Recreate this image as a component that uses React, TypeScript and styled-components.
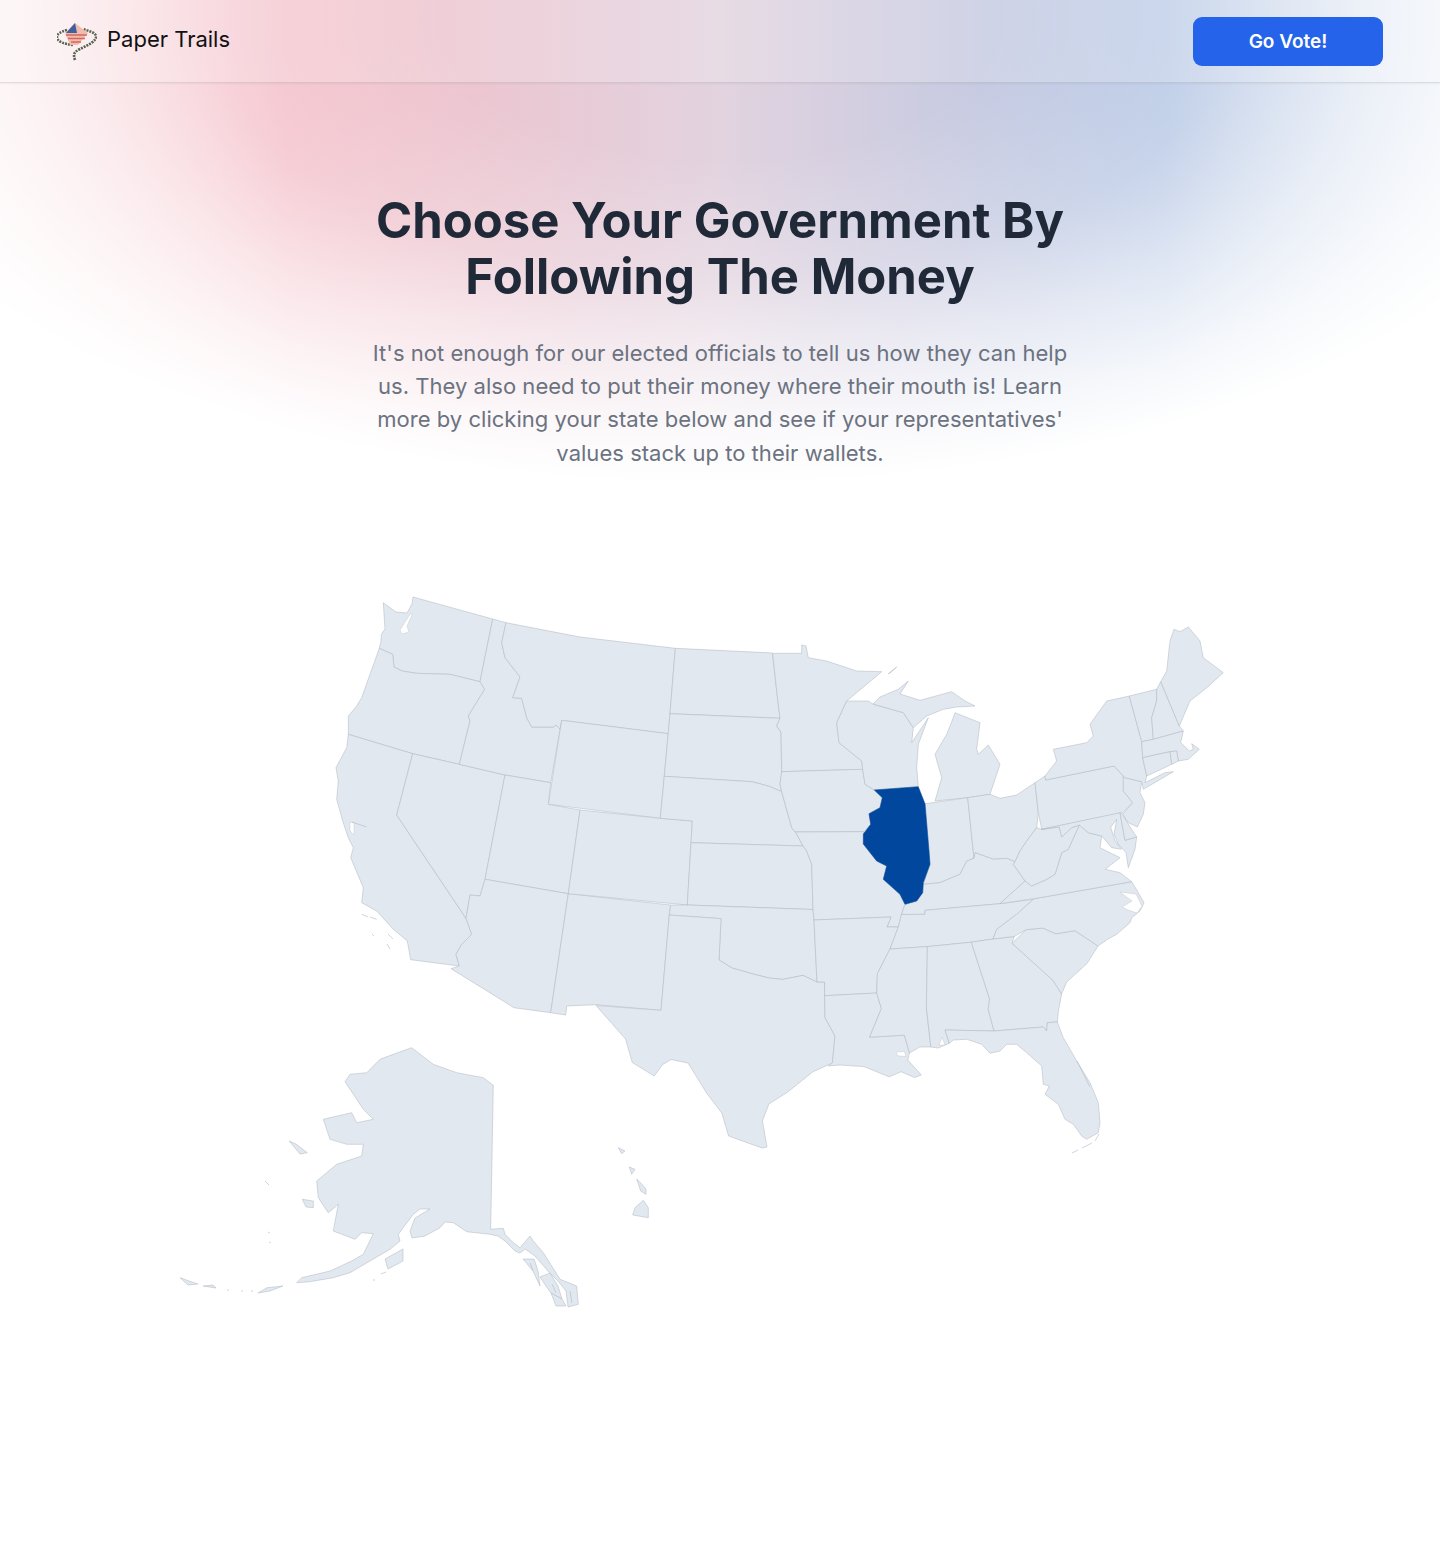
import styled, { createGlobalStyle } from 'styled-components';

const GlobalStyle = createGlobalStyle`
  html, body {
    margin: 0;
    padding: 0;
    background: #fff;
    font-family: Inter, "Liberation Sans", sans-serif;
  }
`;

const Page = styled.div`
  position: relative;
  min-height: 1543px;
  overflow: hidden;
  background: #fff;
`;

const Glow = styled.div`
  position: absolute;
  top: 0;
  left: 0;
  width: 100%;
  height: 520px;
  background: linear-gradient(90deg, #f9dde1 0%, #f3bcc6 20%, #e2d3df 50%, #b2c4e3 81%, #d8e1f0 100%);
  mask-image: radial-gradient(
    ellipse 920px 465px at 720px 20px,
    #000 0%,
    #000 30%,
    rgba(0, 0, 0, 0.75) 55%,
    rgba(0, 0, 0, 0.4) 72%,
    rgba(0, 0, 0, 0.14) 88%,
    transparent 100%
  );
`;

const Header = styled.header`
  position: relative;
  display: flex;
  align-items: center;
  justify-content: space-between;
  height: 82px;
  padding: 0 57px;
  background: rgba(255, 255, 255, 0.18);
  border-bottom: 1px solid rgba(120, 120, 130, 0.2);
  box-shadow: 0 1px 2px rgba(0, 0, 0, 0.05);
`;

const Brand = styled.div`
  display: flex;
  align-items: center;
  gap: 10px;
  margin-top: -4px;
`;

const LogoMark = styled.svg`
  display: block;
  width: 40px;
  height: 40px;
  margin-top: 6px;
`;

const BrandName = styled.span`
  font-size: 22px;
  color: #111;
`;

const VoteButton = styled.button`
  width: 190px;
  height: 49px;
  margin-top: 1px;
  border: none;
  border-radius: 9px;
  background: #2563eb;
  color: #fff;
  font-family: inherit;
  font-size: 19px;
  font-weight: 600;
`;

const Hero = styled.section`
  position: relative;
  display: flex;
  flex-direction: column;
  align-items: center;
  padding-top: 110px;
`;

const Title = styled.h1`
  margin: 0;
  width: 760px;
  font-size: 49px;
  line-height: 56px;
  font-weight: 700;
  color: #1f2937;
  text-align: center;
`;

const Lead = styled.p`
  margin: 31.7px 0 0;
  width: 720px;
  font-size: 22px;
  letter-spacing: 0.03px;
  line-height: 33.3px;
  color: #6b7280;
  text-align: center;
`;

const MapSection = styled.section`
  position: relative;
  display: flex;
  justify-content: center;
  margin-top: 121.3px;
`;

const MapSvg = styled.svg`
  display: block;
  width: 1070px;
  height: 730px;
  margin-left: -30px;
`;

const StateShape = styled.polygon<{ $active?: boolean }>`
  fill: ${(props) => (props.$active ? '#00479d' : '#e2e8f0')};
  stroke: ${(props) => (props.$active ? '#00479d' : '#afb4bf')};
  stroke-width: 0.5;
  stroke-linejoin: round;
`;

const Water = styled.polygon`
  fill: #fff;
  stroke: #bcc1cb;
  stroke-width: 0.4;
`;

const Trace = styled.polyline`
  fill: none;
  stroke: #b4b9c4;
  stroke-width: 0.6;
`;

const states: { id: string; points: string }[] = [
  { id: 'WA', points: '413,596 492.7,618 480,680.7 450,673.3 416.7,672.3 402,670 394,666 392.7,653.3 379.3,647.3 381,640 381.3,633.3 385,628 383.3,601.7 396,611 407,612 412,603' },
  { id: 'OR', points: '379.3,647.3 392.7,653.3 394,666 402,670 416.7,672.3 450,673.3 480,680.7 484.7,688.3 468.3,715 470,720 459.3,763.3 412.7,752.7 348.3,733.3 348.3,715 356,706 361.7,696.7' },
  { id: 'CA', points: '348.3,733.3 412.7,752.7 396.7,814 466,917.3 471.7,933.3 461.7,943.3 456,953.3 459.3,965 410.7,958.7 407.3,940 393.3,928.3 376.7,910 361.7,901.7 363.3,886.7 350.7,856.7 353.3,846.7 348.3,836.7 342.7,820 336.7,798.3 338.3,780 336,766.7 346.7,746.7' },
  { id: 'NV', points: '412.7,752.7 459.3,763.3 505,774 485,878.3 480,895 470,894 466,917.3 396.7,814' },
  { id: 'ID', points: '492.7,618 506,621.7 501.7,641.7 505,656.7 520,676 512.7,696.7 521.7,697.3 526.7,716.7 531.7,726 553.3,726 556,724 560,728 561.7,719.3 550.7,781.7 505,774 459.3,763.3 470,720 468.3,715 484.7,688.3 480,680.7' },
  { id: 'MT', points: '506,621.7 580,636 675.3,647.3 668.3,732.7 561.7,719.3 560,728 556,724 553.3,726 531.7,726 526.7,716.7 521.7,697.3 512.7,696.7 520,676 505,656.7 501.7,641.7' },
  { id: 'WY', points: '561.7,719.3 668.3,732.7 660.3,817.3 548.3,803.3' },
  { id: 'UT', points: '505,774 550.7,781.7 548.3,803.3 580,809 568.3,892.7 485,878.3' },
  { id: 'AZ', points: '485,878.3 568.3,892.7 550.7,1011.7 514,1006.7 451,967.7 459.3,965 456,953.3 461.7,943.3 471.7,933.3 466,917.3 470,894 480,895' },
  { id: 'NM', points: '568.3,892.7 670.7,904 669.3,914 661,1009.3 595.7,1003.7 566.7,1005 565.7,1014 550.7,1011.7' },
  { id: 'CO', points: '580,809 660.3,817.3 692.3,820 687.3,904 568.3,892.7' },
  { id: 'ND', points: '675.3,647.3 772.3,652 776.7,690 780,717.3 670,712.7' },
  { id: 'SD', points: '670,712.7 780,717.3 776.7,725 781,731 781.7,770.7 780,783 781.7,790.7 768.3,785 751.7,780.7 664.3,775.3' },
  { id: 'NE', points: '664.3,775.3 751.7,780.7 768.3,785 781.7,790.7 791.7,826.7 796.7,833 803,845 691,841.7 692.3,820 660.3,817.3' },
  { id: 'KS', points: '691,841.7 803,845 806.7,850 811.7,863.3 813,908.5 687.3,904' },
  { id: 'OK', points: '670.7,904 687.3,904 813,908.5 814,919 817,981 803,974.4 782.7,978.4 769,977 755.6,973.7 732,967 719,959 721,917.6 669.3,914' },
  { id: 'TX', points: '669.3,914 721,917.6 719,959 732,967 755.6,973.7 769,977 782.7,978.4 803,974.4 817,981 824.6,981 824.6,994.7 825,1016.6 835,1035 832.4,1062 813,1070.7 787.8,1091 769,1102.8 762.4,1119.7 767,1146 762,1147 728.6,1135 721.8,1112 706.6,1092 688,1062 671,1058.5 662.7,1063.5 654.2,1075 632.3,1061.5 625.5,1038 596,1004.5 661,1009.3' },
  { id: 'MN', points: '772.7,652.3 801.7,652.3 801.7,644 806,645 808.3,656.7 826.7,660 856.7,670 881.7,670.7 846.7,700 836.7,721.7 839,741.7 861.7,760 862.7,768.3 781.7,770.7 781,731 776.7,725 780,717.3 776.7,690' },
  { id: 'IA', points: '781.7,770.7 862.7,768.3 865,783.3 874.3,789 882.3,796.7 880,806.7 869,812.7 870.7,823.3 864,830.7 795,831 791.7,826.7 781.7,790.7 780,783' },
  { id: 'MO', points: '795,831 864,830.7 863.3,843 876.7,860 886.7,865 883.3,878.3 900,893.3 905,903.3 901.5,913.5 898.3,926 887,926 891,916 814,919 813,908.5 811.7,863.3 806.7,850 803,845 796.7,833' },
  { id: 'AR', points: '814,919 891,916 887,926 898.3,926 890,948 877.4,972.7 876.7,992 824.6,994.7 824.6,981 817,981' },
  { id: 'LA', points: '824.6,994.7 876.7,992 881.4,1007.5 869.6,1036.2 904.4,1034.2 909.5,1052 907.8,1059 921.3,1074 914.5,1076.5 901,1070.7 889.2,1075.8 863.8,1065.6 840,1064 828.3,1065 832.4,1062 835,1035 825,1016.6' },
  { id: 'WI', points: '846.7,700 868.3,700 873.3,703.3 903.3,711.7 913.3,726.7 911.7,741.7 928.3,716.7 918.3,743.3 916.7,766.7 918.3,785.7 874.3,789 865,783.3 862.7,768.3 861.7,760 839,741.7 836.7,721.7' },
  { id: 'MIU', points: '873,703 880,696 898.3,688.3 908.3,680 900,693 920,699.3 951.7,690.7 965,700 975,705 956.7,706 943.3,708.3 926.7,715 913.3,726.7 903.3,711.7' },
  { id: 'MIL', points: '955,711.7 980,721.7 976.7,748.3 978.3,753.3 988.3,744 1000,763.3 990,793.3 967.7,796.7 935,800 941.7,776.7 935,753.3 946.7,733.3 953.3,716.7' },
  { id: 'IN', points: '925,802.7 967.7,796.7 974,857.3 966.7,860 960,873.3 951.7,876.7 940,881.7 923.3,883.3 930,863.3 929,850' },
  { id: 'OH', points: '967.7,796.7 990,793.3 1000,797.3 1016.7,794 1035,781.7 1038.3,811.7 1036.7,826.7 1026.7,840 1020,850 1015,860.7 1006.7,857.3 993.3,858.3 975,851.7 974,857.3' },
  { id: 'KY', points: '975,851.7 993.3,858.3 1006.7,857.3 1015,860.7 1013.3,863.3 1025,880 1000,902.7 925,909.3 925,913.3 901.5,913.5 905,903.3 916.7,900 922.7,891.7 923.3,883.3 940,881.7 951.7,876.7 960,873.3 966.7,860 974,857.3' },
  { id: 'TN', points: '901.5,913.5 925,913.3 925,909.3 1000,902.7 1033.3,898.3 1016.7,913.3 996.7,928.3 993,938 971.3,941.2 927.4,945.6 890,948 898.3,926' },
  { id: 'MS', points: '890,948 927.4,945.6 926.4,1006.5 930.8,1046 919.6,1046 909.5,1052 904.4,1034.2 869.6,1036.2 881.4,1007.5 876.7,992 877.4,972.7' },
  { id: 'AL', points: '927.4,945.6 971.3,941.2 989.6,998 988.2,1008.2 994,1030 945,1029 949.3,1042.3 938.2,1047 930.8,1046 926.4,1006.5' },
  { id: 'GA', points: '971.3,941.2 993,938 1014.3,935.5 1012,942.3 1053,979.4 1061.6,993 1058.2,1011.6 1057.3,1021 1047.3,1021.7 1046.7,1030 1043.3,1026 994,1030 988.2,1008.2 989.6,998' },
  { id: 'SC', points: '1012,942.3 1026,928.7 1043,927 1055.9,932.8 1075,929.7 1098,945 1087,962.5 1066.7,981 1061.6,993 1053,979.4' },
  { id: 'NC', points: '1040,896.7 1131.7,880.7 1138.3,891.7 1144,901.7 1140,910 1131.7,916.7 1130,921.7 1116.7,933.3 1108,938 1098,945 1075,929.7 1055.9,932.8 1043,927 1026,928.7 1014.3,935.5 993,938 996.7,928.3 1016.7,913.3 1033.3,898.3' },
  { id: 'FL', points: '945,1029 994,1030 1043.3,1026 1046.7,1030 1047.3,1021.7 1057.3,1021 1063.3,1036.7 1076.7,1060 1090,1081.7 1098.3,1101.7 1100,1121.7 1098.3,1131.7 1086.7,1138.3 1081.7,1135 1073.3,1123.3 1065,1118.3 1058.3,1103.3 1045,1093.3 1049.3,1085 1043.3,1083.3 1041.7,1065 1026.7,1051.7 1016.7,1043.3 1006.7,1043.3 1000,1050 990,1052.3 981.7,1043.3 966.7,1038.3 953.3,1039 949.3,1042.3' },
  { id: 'VA', points: '1025,880 1031.7,885 1046.7,878.3 1055,873.3 1061.7,851.7 1068.3,848.3 1079.3,824 1088.3,831.7 1101.7,835 1100,846.7 1120,856.7 1105,868.3 1120,871.7 1131.7,880.7 1040,896.7 1000,902.7' },
  { id: 'WV', points: '1015,860.7 1020,850 1026.7,840 1036.7,826.7 1041.7,828.3 1059.3,826 1061.7,836 1071.7,826.7 1079.3,824 1068.3,848.3 1061.7,851.7 1055,873.3 1046.7,878.3 1031.7,885 1025,880 1013.3,863.3' },
  { id: 'PA', points: '1035,781.7 1045,775 1045.7,779 1114,765 1123.3,775 1123.3,790 1132.7,801.7 1122.7,811.7 1041.7,828.3 1038.3,811.7' },
  { id: 'MD', points: '1041.7,828.3 1120,811.7 1125,839.3 1136.7,836 1135,848.3 1128.3,866.7 1126,851.7 1123.3,848.3 1118.3,843.3 1114,833.3 1116.7,818.3 1110.7,826 1115,840 1121.7,848.3 1111.7,846.7 1101.7,835 1088.3,831.7 1079.3,824 1071.7,826.7 1061.7,836 1059.3,826' },
  { id: 'DE', points: '1120,811.7 1122.7,813.3 1127.3,821.7 1136.7,836 1125,839.3' },
  { id: 'NJ', points: '1125,776.7 1141.7,780.7 1140,791.7 1145,801.7 1143.3,813.3 1137.3,826 1128.3,821.7 1122.7,813.3 1132.7,801.7 1123.3,790 1123.3,775' },
  { id: 'NY', points: '1045,775 1056.7,760 1053.3,748.3 1086.7,741.7 1093.3,735 1090,723.3 1106.7,700 1129.3,695 1141.7,740.7 1142.7,756.7 1146.7,775 1145,781.7 1165,771.7 1173.3,770.7 1143.3,788.3 1141.7,780.7 1125,776.7 1114,765 1045.7,779' },
  { id: 'VT', points: '1129.3,695 1156.7,688.3 1156.7,700 1151.7,716.7 1153.3,738.3 1141.7,740.7' },
  { id: 'NH', points: '1156.7,688.3 1160.7,680.7 1179.3,725 1183.3,730 1153.3,738.3 1151.7,716.7 1156.7,700' },
  { id: 'ME', points: '1160.7,680.7 1166.7,670 1170,640 1174,628.3 1180,630.7 1188.3,626 1200,640 1203.3,656.7 1223.3,671.7 1206.7,686.7 1190,700 1179.3,725' },
  { id: 'MA', points: '1141.7,740.7 1153.3,738.3 1183.3,730 1180.7,741.7 1189.3,750 1193.3,748.3 1191.7,742.7 1199.3,748.3 1188.3,758.3 1178.3,760 1176.7,750 1170,750.7 1142.7,756.7' },
  { id: 'CT', points: '1142.7,756.7 1170,750.7 1171.7,763.3 1146.7,775' },
  { id: 'RI', points: '1170,750.7 1176.7,750 1178.3,760 1171.7,763.3' },
  { id: 'AK', points: '411.7,1046.7 433.3,1063.3 456.7,1071.7 483.3,1076.7 493.3,1084.3 490.7,1228.3 503.3,1227.3 505,1233.3 513.3,1241.7 520,1246.7 530,1235 533.3,1240 543.3,1251.7 560,1278.3 576.7,1285 578.3,1303.3 568,1306 566,1290 558,1280 548,1270 535,1255 525,1248 520,1252 515,1250 505,1240 498,1235 490,1233.3 466.7,1230.7 453.3,1221.7 445,1221 440,1226.7 425,1235 412,1237 410,1230 415,1217 430,1208 420,1208 413.3,1213.3 398.3,1233.3 400,1240 390,1248.3 370,1260 350,1271.7 333.3,1276.7 310,1280.7 296.7,1281.7 301.7,1276.7 330,1270 351.7,1260 363.3,1253.3 373.3,1232.7 361.7,1231.7 355,1238.3 333.3,1230 338.3,1203.3 328.3,1211.7 318.3,1196.7 316.7,1180 336.7,1163.3 361.7,1155 363.3,1143.3 346.7,1143.3 330,1138.3 323.3,1118.3 351.7,1111.7 356.7,1121.7 373.3,1118.3 363.3,1108.3 345,1080.7 350,1073.3 366.7,1071.7 380,1058.3 393.3,1053.3' },
  { id: 'AK1', points: '289.3,1140 296,1143 307.3,1151.7 300,1153 295,1147' },
  { id: 'AK2', points: '302.3,1198.3 313.3,1200 313.3,1206.7 306,1206' },
  { id: 'AK3', points: '385,1258 403,1248 403,1260 388,1268' },
  { id: 'AK4', points: '180,1276.7 192,1281 198,1283 188,1284' },
  { id: 'AK5', points: '203,1285 213,1284 216,1287' },
  { id: 'AK6', points: '258,1292 267,1286.7 283,1285 270,1290' },
  { id: 'AK7', points: '523,1258 534,1258 538,1270 540,1285 533,1270' },
  { id: 'AK8', points: '540,1276 550,1272 558,1285 562,1298 551,1292 546,1285' },
  { id: 'AK9', points: '551,1292 562,1298 566,1305 556,1305' },
  { id: 'HI1', points: '618.3,1146.7 625,1150 621.7,1152.7' },
  { id: 'HI2', points: '629.3,1166 635,1168.3 631.7,1173.3' },
  { id: 'HI3', points: '636.7,1178 641.7,1183 646,1188 646,1193.3 640.7,1190' },
  { id: 'HI4', points: '643.3,1199.3 648.3,1206.7 648.3,1216.7 632.7,1214 635,1206.7' },
  { id: 'IR', points: '888.3,672.7 896.7,666 890,672' },
  { id: 'IL', points: '874.3,789 918.3,785.7 925,802.7 929,850 930,863.3 923.3,881.7 922.7,891.7 916.7,900 905,903.3 900,893.3 883.3,878.3 886.7,865 876.7,860 863.3,843 863.3,833 870.7,823.3 869,812.7 880,806.7 882.3,796.7' },
];

const inlets = [
  '350,821 354,822 354,834 350,830',
  '411,612 412,614 407,625 409,631 402,633 400,629 405,621',
  '1120,891 1136,893 1142,905 1137,912 1128,909 1122,906 1132,900',
  '896,1051 904.4,1050.4 906,1055.5 897.6,1054.8',
  '939,1044 942,1036 945,1044',
];

const traces = [
  '352,821 366.7,826',
  '361.7,913.3 368,916',
  '370,916 376.7,918.3',
  '372,933 374,935',
  '388,933 393,938',
  '387,943 390,948',
  '1072,1152 1078,1149',
  '1082,1147 1092,1142',
  '1095,1140 1099,1133',
  '1077,1060 1090,1086',
  '265,1180 269,1184',
  '268,1231 270,1232',
  '269,1241 271,1242',
  '227,1289 229,1289',
  '241,1290 243,1290',
  '251,1290 253,1290',
  '373,1279 375,1279',
  '381,1273 386,1271',
  '533,1270 530,1262',
  '552,1283 556,1292',
  '570,1290 572,1302',
];

const Logo = () => (
  <LogoMark viewBox="57 22 40 40" aria-hidden="true">
    <path
      d="M75 60 C73 54 74 52 80 49 C88 45 97 41 96 36 C95 32 88 31 83 29 M67 30 C60 32 57 34 57 37 C57 42 65 44 73 45"
      fill="none"
      stroke="#56644f"
      strokeWidth="2.6"
      strokeDasharray="2 1"
    />
    <polygon points="75,23 88,33 78,45 70,45 65,33" fill="#efbcae" />
    <polygon points="75,23 77,33 66,33" fill="#3f5f9f" />
    <path d="M66 35 H87 M68 38.5 H85 M71 42 H81" stroke="#d4685e" strokeWidth="1.3" />
  </LogoMark>
);

export default function App() {
  return (
    <Page>
      <GlobalStyle />
      <Glow />
      <Header>
        <Brand>
          <Logo />
          <BrandName>Paper Trails</BrandName>
        </Brand>
        <VoteButton>Go Vote!</VoteButton>
      </Header>
      <Hero>
        <Title>Choose Your Government By Following The Money</Title>
        <Lead>
          It's not enough for our elected officials to tell us how they can help us. They also need to put their
          money where their mouth is! Learn more by clicking your state below and see if your representatives'
          values stack up to their wallets.
        </Lead>
      </Hero>
      <MapSection>
        <MapSvg viewBox="170 590 1070 730" role="img" aria-label="Map of the United States">
          {states.map((state) => (
            <StateShape key={state.id} points={state.points} $active={state.id === 'IL'} />
          ))}
          {inlets.map((points) => (
            <Water key={points} points={points} />
          ))}
          {traces.map((points) => (
            <Trace key={points} points={points} />
          ))}
        </MapSvg>
      </MapSection>
    </Page>
  );
}
